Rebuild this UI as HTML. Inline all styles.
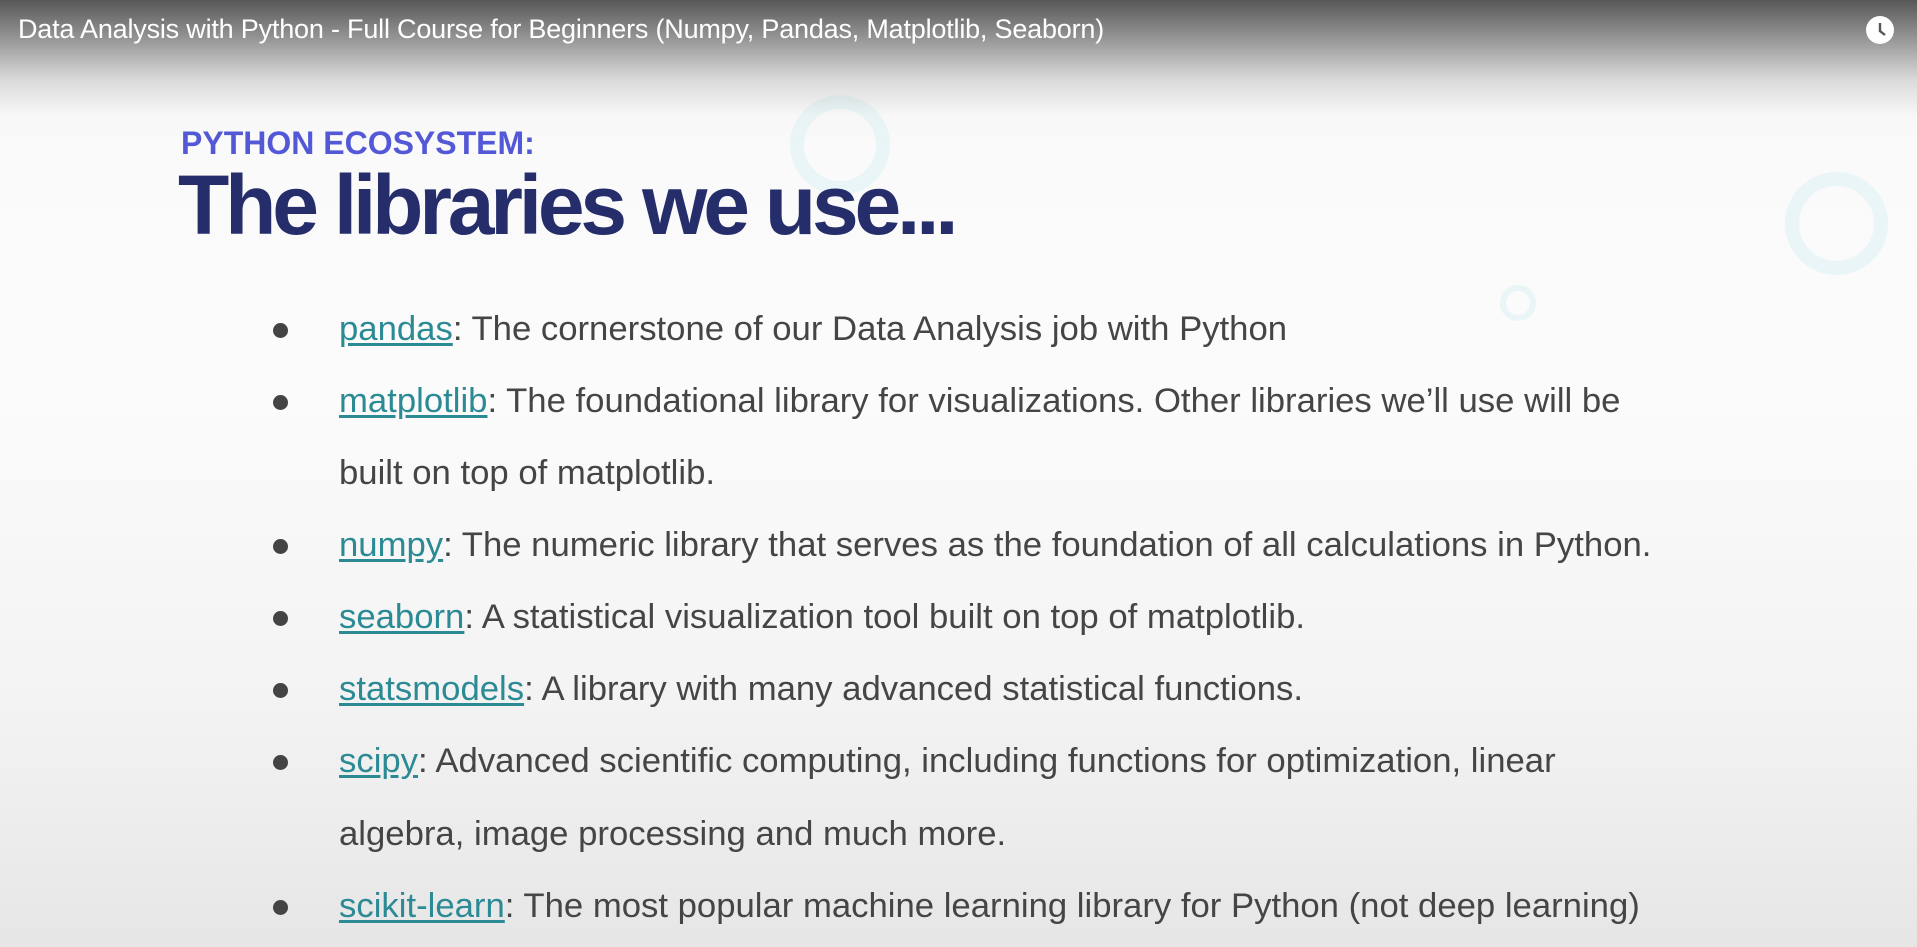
<!DOCTYPE html>
<html><head><meta charset="utf-8"><style>
html,body{margin:0;padding:0}
body{width:1917px;height:947px;overflow:hidden;position:relative;font-family:"Liberation Sans",Arial,sans-serif;
background:linear-gradient(180deg,#fafafa 0px,#fbfbfb 400px,#f3f3f3 700px,#e6e6e6 947px);}
.topbar{position:absolute;left:0;top:0;width:1917px;height:150px;background:linear-gradient(180deg,rgba(70,70,70,.9) 0px,rgba(110,110,110,.7) 40px,rgba(170,170,170,.4) 80px,rgba(230,230,230,.15) 115px,rgba(255,255,255,0) 150px);}
.ttl{position:absolute;left:18px;top:14px;font-size:27px;color:#fff;white-space:nowrap;letter-spacing:-0.2px}
.clock{position:absolute;left:1866px;top:16px;width:28px;height:28px;border-radius:50%;background:#fff}
.circ{position:absolute;border-radius:50%;border:14px solid rgba(200,235,238,.35)}
.eco{position:absolute;left:181px;top:125px;font-size:32px;font-weight:bold;color:#5358d6}
.h1{position:absolute;left:178px;top:157px;font-size:84px;font-weight:900;color:#252e6a;letter-spacing:-4.2px;white-space:nowrap}
.li{position:absolute;left:339px;font-size:34.7px;color:#454545;white-space:nowrap}
.li a{color:#2b8a94;text-decoration:underline;text-underline-offset:3px}
.dot{position:absolute;left:273px;width:15px;height:15px;border-radius:50%;background:#444}
</style></head><body>
<div class="circ" style="left:790px;top:95px;width:72px;height:72px"></div>
<div class="circ" style="left:1785px;top:172px;width:75px;height:75px"></div>
<div class="circ" style="left:1500px;top:285px;width:24px;height:24px;border-width:6px"></div>
<div class="topbar"></div>
<div class="ttl">Data Analysis with Python - Full Course for Beginners (Numpy, Pandas, Matplotlib, Seaborn)</div>
<div class="clock"><svg width="28" height="28" viewBox="0 0 28 28"><path d="M14 7v8l5 4" stroke="#555" stroke-width="2.4" fill="none"/></svg></div>
<div class="eco">PYTHON ECOSYSTEM:</div>
<div class="h1">The libraries we use...</div>

<div class="dot" style="top:323px"></div><div class="li" style="top:310px"><a>pandas</a>: The cornerstone of our Data Analysis job with Python</div>
<div class="dot" style="top:395px"></div><div class="li" style="top:382px"><a>matplotlib</a>: The foundational library for visualizations. Other libraries we’ll use will be</div>
<div class="li" style="top:454px">built on top of matplotlib.</div>
<div class="dot" style="top:539px"></div><div class="li" style="top:526px"><a>numpy</a>: The numeric library that serves as the foundation of all calculations in Python.</div>
<div class="dot" style="top:611px"></div><div class="li" style="top:598px"><a>seaborn</a>: A statistical visualization tool built on top of matplotlib.</div>
<div class="dot" style="top:683px"></div><div class="li" style="top:670px"><a>statsmodels</a>: A library with many advanced statistical functions.</div>
<div class="dot" style="top:755px"></div><div class="li" style="top:742px"><a>scipy</a>: Advanced scientific computing, including functions for optimization, linear</div>
<div class="li" style="top:815px">algebra, image processing and much more.</div>
<div class="dot" style="top:900px"></div><div class="li" style="top:887px"><a>scikit-learn</a>: The most popular machine learning library for Python (not deep learning)</div>
</body></html>
